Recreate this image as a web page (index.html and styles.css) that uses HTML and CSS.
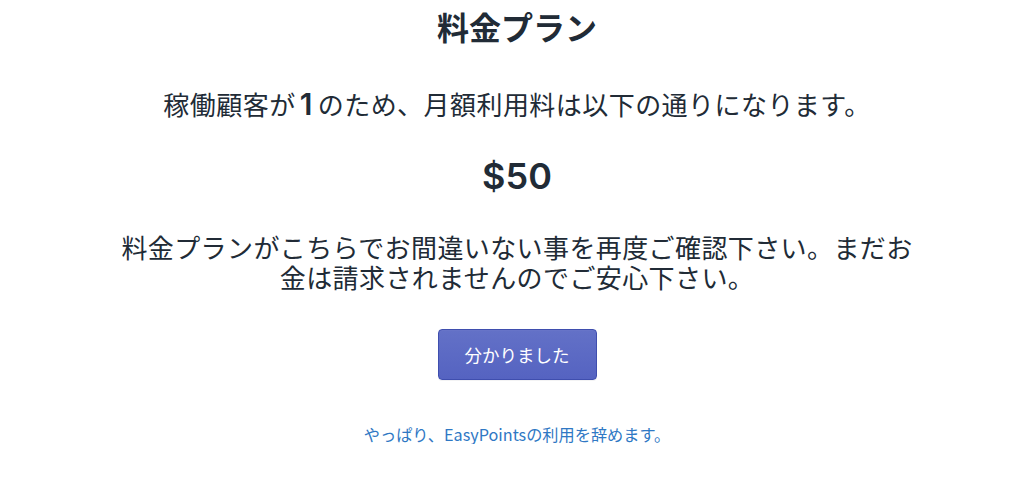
FILE: index.html
```html
<!DOCTYPE html>
<html lang="ja">
<head>
<meta charset="utf-8">
<link rel="stylesheet" href="styles.css">
</head>
<body>
<main class="page">
  <h1 class="title">料金プラン</h1>
  <p class="lead">稼働顧客が<span class="count">1</span>のため、月額利用料は以下の通りになります。</p>
  <p class="price">$50</p>
  <p class="note">料金プランがこちらでお間違いない事を再度ご確認下さい。まだお金は請求されませんのでご安心下さい。</p>
  <button class="btn-primary" type="button">分かりました</button>
  <a class="cancel" href="#">やっぱり、EasyPointsの利用を辞めます。</a>
</main>
</body>
</html>
```
FILE: styles.css
```css
html, body {
  margin: 0;
  padding: 0;
  background: #ffffff;
}
body {
  font-family: "Noto Sans CJK JP", "Noto Sans", sans-serif;
  color: #212b36;
}
.page {
  display: flex;
  flex-direction: column;
  align-items: center;
  text-align: center;
  padding: 6px 0 0 10px;
}
.title {
  margin: 0;
  font-size: 32px;
  line-height: 40px;
  font-weight: 700;
}
.lead {
  margin: 40px 0 0;
  font-size: 26px;
  line-height: 36px;
  font-weight: 400;
  letter-spacing: 0.45px;
}
.count {
  font-family: "Inter", "Liberation Sans", sans-serif;
  font-weight: 600;
  font-size: 30px;
  margin: 0 5px 0 4px;
}
.price {
  margin: 34px 0 0;
  font-family: "Inter", "Liberation Sans", sans-serif;
  font-size: 36px;
  line-height: 40px;
  font-weight: 600;
}
.note {
  margin: 36px 0 0;
  width: 810px;
  font-size: 26px;
  line-height: 30px;
  letter-spacing: 0.4px;
}
.btn-primary {
  margin-top: 37px;
  width: 159px;
  height: 51px;
  border: 1px solid #3f4eae;
  border-radius: 4px;
  background: linear-gradient(180deg, #6371c7, #5563c1);
  box-shadow: inset 0 1px 0 0 #6774c8, 0 1px 0 0 rgba(22,29,37,.05);
  color: #ffffff;
  font-family: "Noto Sans CJK JP", "Noto Sans", sans-serif;
  font-size: 17.5px;
  cursor: pointer;
}
.cancel {
  margin-top: 44px;
  font-size: 16.2px;
  line-height: 20px;
  color: #2f78c4;
  text-decoration: none;
}
```
